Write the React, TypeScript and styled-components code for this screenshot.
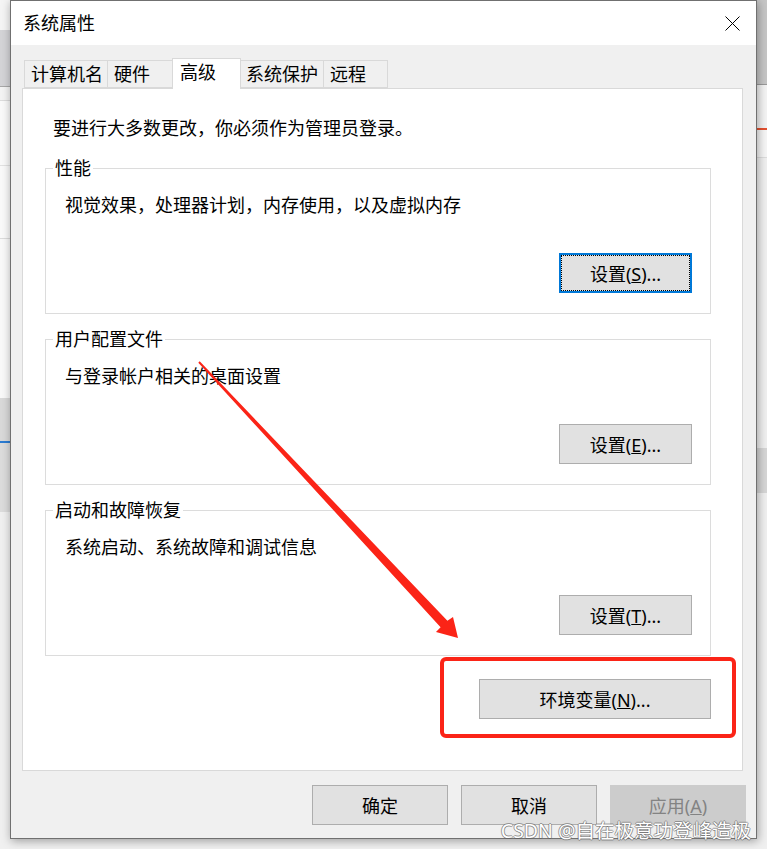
import React from "react";
import styled, { createGlobalStyle } from "styled-components";

const GlobalStyle = createGlobalStyle`
  html, body {
    margin: 0;
    padding: 0;
  }
  body {
    background: #f0f0f0;
    font-family: "Noto Sans", "Noto Sans CJK SC", sans-serif;
    font-size: 18px;
    color: #000;
  }
`;

const Stage = styled.div`
  position: relative;
  width: 767px;
  height: 849px;
  overflow: hidden;
  display: flex;
  align-items: flex-start;
  background: #f0f0f0;
`;

const Strip = styled.div<{ $bands: string }>`
  width: 10px;
  height: 849px;
  flex: none;
  background: ${(p) => p.$bands};
`;

const leftBands = `linear-gradient(to bottom,
  #f5f5f5 0 30px, #d4d4d7 30px 86px, #a8a8a8 86px 87px, #f4f4f4 87px 100px,
  #dcdcdc 100px 101px, #fafafa 101px 165px, #e2e2e2 165px 166px, #fafafa 166px 238px,
  #dcdcdc 238px 239px, #f9f9f9 239px 398px, #d9d9d9 398px 441px, #2b7cd3 441px 443px,
  #dcdcdc 443px 512px, #f0f0f0 512px)`;

const rightBands = `linear-gradient(to bottom,
  #c6c6c6 0 84px, #9a9a9a 84px 85px, #f4f4f4 85px 128px, #e4502f 128px 130px,
  #f6f6f6 130px 157px, #dddddd 157px 158px, #f0f0f0 158px 448px, #d6d6d6 448px 493px,
  #f0f0f0 493px)`;

const Dialog = styled.div`
  position: relative;
  z-index: 1;
  flex: none;
  width: 747px;
  height: 839px;
  box-sizing: border-box;
  border: 1px solid #707070;
  background: #f0f0f0;
  box-shadow: 1px 2px 9px rgba(0, 0, 0, 0.35);
  display: flex;
  flex-direction: column;
`;

const TitleBar = styled.div`
  height: 44px;
  flex: none;
  background: #fff;
  display: flex;
  align-items: center;
  justify-content: space-between;
  padding: 0 16px 0 12px;
`;

const Title = styled.span`
  font-size: 18px;
  line-height: 24px;
`;

const Body = styled.div`
  flex: 1;
  display: flex;
  flex-direction: column;
  padding: 13px 13px 13px 11px;
  min-height: 0;
`;

const TabStrip = styled.div`
  height: 30px;
  display: flex;
  align-items: flex-end;
  padding-left: 2px;
`;

const Tab = styled.div<{ $w: number; $active?: boolean; $last?: boolean }>`
  box-sizing: border-box;
  width: ${(p) => p.$w}px;
  height: ${(p) => (p.$active ? 31 : 28)}px;
  margin: ${(p) => (p.$active ? "0 -2px -1px -2px" : "0")};
  position: relative;
  z-index: ${(p) => (p.$active ? 2 : 0)};
  background: ${(p) => (p.$active ? "#fff" : "#f0f0f0")};
  border: 1px solid #d9d9d9;
  border-bottom: ${(p) => (p.$active ? "none" : "1px solid #d9d9d9")};
  border-right: ${(p) => (p.$active || p.$last ? "1px solid #d9d9d9" : "none")};
  padding-left: ${(p) => (p.$active ? 7 : 6)}px;
  font-size: 18px;
  line-height: 26px;
  white-space: nowrap;
`;

const Panel = styled.div`
  flex: 1;
  background: #fff;
  border: 1px solid #d9d9d9;
  padding: 27px 31px 0 22px;
  display: flex;
  flex-direction: column;
`;

const Intro = styled.div`
  margin-left: 8px;
  line-height: 24px;
`;

const Group = styled.div<{ $gap: number }>`
  margin-top: ${(p) => p.$gap}px;
  border: 1px solid #dcdcdc;
  padding: 0 18px 20px 19px;
  display: flex;
  flex-direction: column;
`;

const Legend = styled.div`
  align-self: flex-start;
  margin: -12px 0 0 -12px;
  padding: 0 2px;
  line-height: 22px;
  background: #fff;
`;

const Desc = styled.div`
  margin-top: 14px;
  line-height: 24px;
`;

const ButtonRow = styled.div<{ $gap: number }>`
  margin-top: ${(p) => p.$gap}px;
  display: flex;
  justify-content: flex-end;
`;

const Button = styled.button<{ $w: number; $focus?: boolean }>`
  box-sizing: border-box;
  width: ${(p) => p.$w}px;
  height: 40px;
  padding: 0;
  font-family: inherit;
  font-size: 18px;
  color: #000;
  background: #e1e1e1;
  border: ${(p) => (p.$focus ? "2px solid #0078d7" : "1px solid #adadad")};
  outline: ${(p) => (p.$focus ? "1px dotted #000" : "none")};
  outline-offset: -3px;
  border-radius: 0;
  &:disabled {
    background: #cccccc;
    border-color: #cccccc;
    color: #838383;
  }
`;

const Footer = styled.div`
  flex: none;
  margin: 14px -3px 0 0;
  display: flex;
  justify-content: flex-end;
  gap: 13px;
`;

const Overlay = styled.svg`
  position: absolute;
  left: 0;
  top: 0;
  z-index: 5;
  pointer-events: none;
`;

const Watermark = styled.div`
  position: absolute;
  right: 16px;
  bottom: 7px;
  z-index: 6;
  font-family: "Noto Sans", "Noto Sans CJK SC", sans-serif;
  font-size: 19.5px;
  line-height: 22px;
  color: #fff;
  text-shadow: 1px 0 0 rgba(90, 90, 90, 0.55), -1px 0 0 rgba(90, 90, 90, 0.55),
    0 1px 0 rgba(90, 90, 90, 0.55), 0 -1px 0 rgba(90, 90, 90, 0.55);
  white-space: nowrap;
`;

const tabs = [
  { label: "计算机名", w: 83 },
  { label: "硬件", w: 67 },
  { label: "高级", w: 69, active: true },
  { label: "系统保护", w: 84 },
  { label: "远程", w: 65, last: true },
];

const groups = [
  { title: "性能", desc: "视觉效果，处理器计划，内存使用，以及虚拟内存", key: "S", focus: true },
  { title: "用户配置文件", desc: "与登录帐户相关的桌面设置", key: "E" },
  { title: "启动和故障恢复", desc: "系统启动、系统故障和调试信息", key: "T" },
];

const App = () => {
  return (
    <Stage>
      <GlobalStyle />
      <Strip $bands={leftBands} />
      <Dialog>
        <TitleBar>
          <Title>系统属性</Title>
          <svg width="15" height="15" viewBox="0 0 15 15">
            <path d="M0.5 0.5 L14.5 14.5 M14.5 0.5 L0.5 14.5" stroke="#000" strokeWidth="1" fill="none" />
          </svg>
        </TitleBar>
        <Body>
          <TabStrip>
            {tabs.map((t) => (
              <Tab key={t.label} $w={t.w} $active={t.active} $last={t.last}>
                {t.label}
              </Tab>
            ))}
          </TabStrip>
          <Panel>
            <Intro>要进行大多数更改，你必须作为管理员登录。</Intro>
            {groups.map((g, i) => (
              <Group key={g.title} $gap={i === 0 ? 28 : 25}>
                <Legend>{g.title}</Legend>
                <Desc>{g.desc}</Desc>
                <ButtonRow $gap={36}>
                  <Button $w={133} $focus={g.focus}>
                    设置(<u>{g.key}</u>)...
                  </Button>
                </ButtonRow>
              </Group>
            ))}
            <ButtonRow $gap={23}>
              <Button $w={232}>
                环境变量(<u>N</u>)...
              </Button>
            </ButtonRow>
          </Panel>
          <Footer>
            <Button $w={136}>确定</Button>
            <Button $w={136}>取消</Button>
            <Button $w={136} disabled>
              应用(<u>A</u>)
            </Button>
          </Footer>
        </Body>
      </Dialog>
      <Strip $bands={rightBands} />

      <Overlay width="767" height="849" viewBox="0 0 767 849">
        <polygon
          points="199.7,361.3 447.4,620.8 453,617 458,638 436,632 440.6,627.2 198.3,362.7"
          fill="#fb2417"
        />
        <rect x="442" y="659" width="292" height="77" rx="4" ry="4" fill="none" stroke="#fb2417" strokeWidth="4" />
      </Overlay>
      <Watermark>CSDN @自在极意功登峰造极</Watermark>
    </Stage>
  );
};

export default App;
